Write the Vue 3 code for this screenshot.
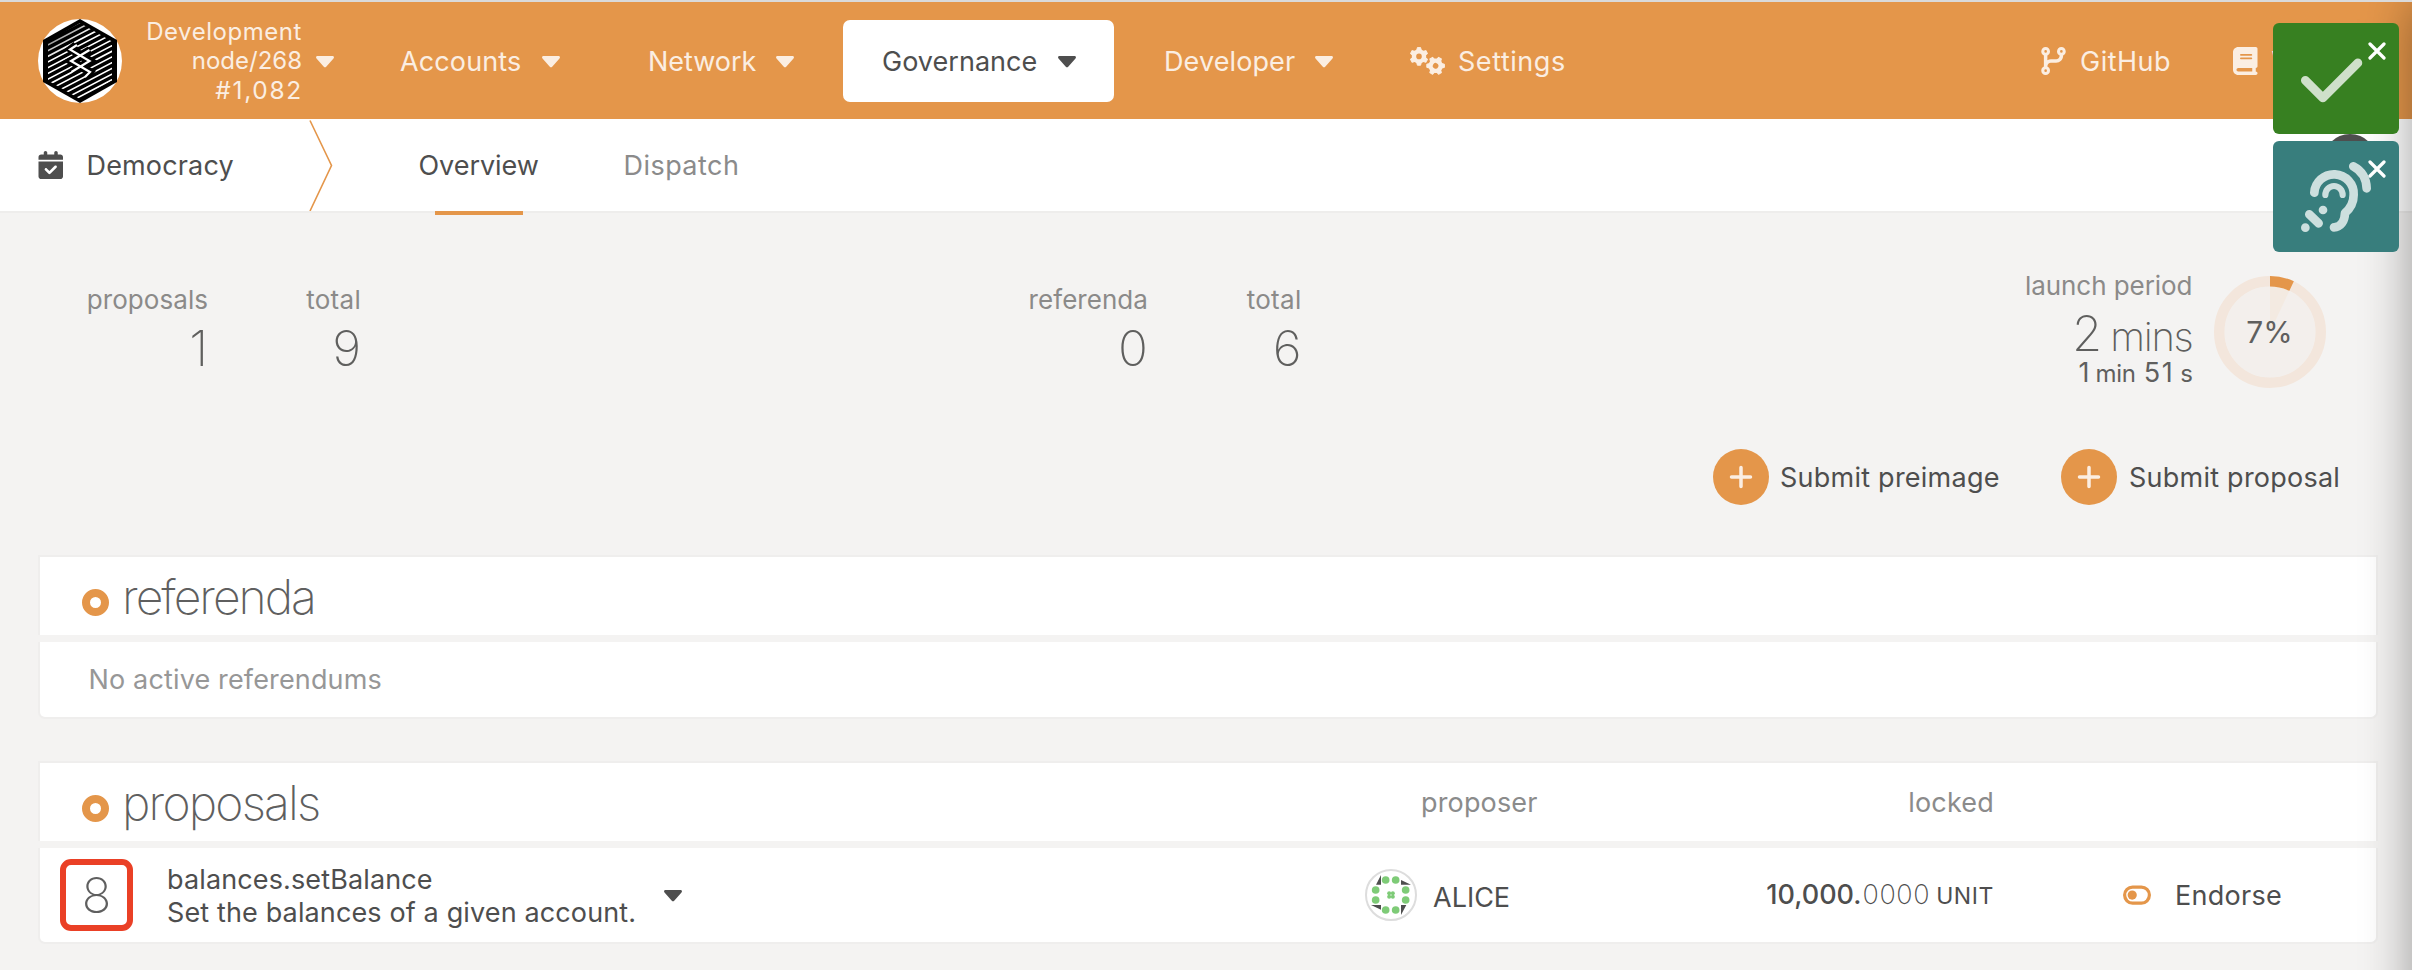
<script setup>
const stripes = Array.from({ length: 24 }, (_, i) => {
  const y = -8 + i * 5.7
  return `M0 ${y + 22}L84 ${y - 22}`
}).join('')

const teeth = [0, 60, 120, 180, 240, 300]
const gears = [
  { x: 9, y: 9.4, turn: 0 },
  { x: 25.6, y: 18.8, turn: 30 },
]

const menus = [
  { label: 'Accounts', ls: '0.12px' },
  { label: 'Network', ls: '-0.03px' },
  { label: 'Governance', ls: '0.03px', active: true },
  { label: 'Developer', ls: '0.11px' },
]

const stats = [
  { label: 'proposals', value: '1', ls: '0.05px' },
  { label: 'total', value: '9', ls: '0.3px' },
  { label: 'referenda', value: '0', ls: '0.05px' },
  { label: 'total', value: '6', ls: '0.3px' },
]

const progress = 7
const angle = (progress / 100) * 2 * Math.PI
const px = (r) => 56 + r * Math.sin(angle)
const py = (r) => 56 - r * Math.cos(angle)
const arc = `M56 0A56 56 0 0 1 ${px(56)} ${py(56)}L${px(45.5)} ${py(45.5)}A45.5 45.5 0 0 0 56 10.5Z`
const wedge = `M56 56L56 10.5A45.5 45.5 0 0 1 ${px(45.5)} ${py(45.5)}Z`

const dots = [[62, 33], [92, 33], [32, 63], [32, 93], [122, 63], [122, 93], [62, 123], [92, 123]]
const seeds = [[72.5, 72.5], [83.5, 72.5], [72.5, 83.5], [83.5, 83.5]]
</script>

<template>
  <div class="page">
    <header class="topbar">
      <svg class="logo" viewBox="0 0 84 84">
        <defs>
          <clipPath id="hex"><path d="M42 4L74 22.5V61.5L42 80L10 61.5V22.5Z" /></clipPath>
          <linearGradient id="fade" gradientUnits="userSpaceOnUse" x1="10" y1="5" x2="50" y2="60">
            <stop offset="0.1" stop-color="#555" />
            <stop offset="0.45" stop-color="#fff" />
          </linearGradient>
        </defs>
        <circle cx="42" cy="42" r="42" fill="#fff" />
        <path d="M42 0L79 21V63L42 84L5 63V21Z" fill="#000" />
        <g clip-path="url(#hex)">
          <path :d="stripes" stroke="url(#fade)" stroke-width="1.6" fill="none" />
        </g>
        <path d="M38 26l-5 4 19 12-18 11M52 31L33 42l19 11-4 5" stroke="#000" stroke-width="8" fill="none" />
        <path d="M39 26l-7 4.500 19.500 11.500-18 11M51.500 31L33 42l19 11-5 5" stroke="#fff" stroke-width="2.200" fill="none" />
      </svg>
      <div class="chain">
        <span class="dev">Development</span>
        <span>node/268</span>
        <span class="block">#1,082</span>
      </div>
      <svg class="caret" viewBox="0 0 18 12"><path d="M1.500 0h15c1.300 0 2 1.400 1 2.400l-7.300 8.300c-.7.700-1.700.7-2.400 0L.5 2.400C-.5 1.400.2 0 1.500 0z" /></svg>
      <nav class="menu">
        <a v-for="m in menus" :key="m.label" class="item" :class="{ active: m.active }">
          <span :style="{ letterSpacing: m.ls }">{{ m.label }}</span>
          <svg class="caret" viewBox="0 0 18 12"><path d="M1.500 0h15c1.300 0 2 1.400 1 2.400l-7.300 8.300c-.7.700-1.700.7-2.400 0L.5 2.400C-.5 1.400.2 0 1.500 0z" /></svg>
        </a>
      </nav>
      <a class="settings">
        <svg class="gears" viewBox="0 0 35 28">
          <g v-for="(g, i) in gears" :key="i" :transform="`translate(${g.x} ${g.y}) rotate(${g.turn})`">
            <circle r="5" fill="none" stroke="currentColor" stroke-width="4.400" />
            <path v-for="t in teeth" :key="t" d="M-2.400-5.500L-1.600-8.800h3.200L2.400-5.500z" :transform="`rotate(${t})`" fill="currentColor" stroke="currentColor" stroke-width="1" stroke-linejoin="round" />
          </g>
        </svg>
        <span>Settings</span>
      </a>
      <a class="link github">
        <svg width="25" height="28" viewBox="0 0 448 512"><path fill="currentColor" d="M80 104a24 24 0 1 0 0-48 24 24 0 1 0 0 48zm80-24c0 32.800-19.700 61-48 73.300v87.800c18.800-10.900 40.700-17.100 64-17.100h96c35.300 0 64-28.700 64-64v-6.700C307.700 141 288 112.800 288 80c0-44.200 35.800-80 80-80s80 35.800 80 80c0 32.800-19.700 61-48 73.300V160c0 70.700-57.300 128-128 128H176c-35.300 0-64 28.700-64 64v6.700c28.300 12.300 48 40.500 48 73.300c0 44.200-35.800 80-80 80s-80-35.800-80-80c0-32.800 19.700-61 48-73.300V352 153.300C19.700 141 0 112.800 0 80C0 35.800 35.800 0 80 0s80 35.800 80 80zm232 0a24 24 0 1 0-48 0 24 24 0 1 0 48 0zM80 456a24 24 0 1 0 0-48 24 24 0 1 0 0 48z" /></svg>
        <span>GitHub</span>
      </a>
      <a class="link wiki">
        <svg width="24.500" height="28" viewBox="0 0 448 512"><path fill="currentColor" d="M96 0C43 0 0 43 0 96V416c0 53 43 96 96 96H384h32c17.700 0 32-14.300 32-32s-14.300-32-32-32V384c17.700 0 32-14.300 32-32V32c0-17.700-14.300-32-32-32H384 96zm0 384H352v64H96c-17.700 0-32-14.300-32-32s14.300-32 32-32zm32-240c0-8.800 7.200-16 16-16H336c8.800 0 16 7.200 16 16s-7.200 16-16 16H144c-8.800 0-16-7.200-16-16zm16 48H336c8.800 0 16 7.200 16 16s-7.200 16-16 16H144c-8.800 0-16-7.200-16-16s7.200-16 16-16z" /></svg>
        <span>Wiki</span>
      </a>
    </header>

    <div class="tabs">
      <svg class="cal" viewBox="0 0 448 512"><path fill="currentColor" d="M128 0c17.700 0 32 14.300 32 32V64H288V32c0-17.700 14.300-32 32-32s32 14.300 32 32V64h48c26.500 0 48 21.500 48 48v48H0V112C0 85.500 21.500 64 48 64H96V32c0-17.700 14.300-32 32-32zM0 192H448V464c0 26.500-21.500 48-48 48H48c-26.500 0-48-21.500-48-48V192zM329 305c9.400-9.400 9.400-24.600 0-33.900s-24.600-9.400-33.900 0l-95 95-47-47c-9.400-9.400-24.600-9.400-33.900 0s-9.400 24.600 0 33.900l64 64c9.400 9.400 24.600 9.400 33.900 0L329 305z" /></svg>
      <span class="section">Democracy</span>
      <svg class="chevron" viewBox="0 0 24 92"><path d="M1 1.500L22.500 46.500L1 92" fill="none" stroke="#e4964a" stroke-width="1.600" /></svg>
      <a class="tab current">Overview</a>
      <a class="tab dispatch">Dispatch</a>
      <span class="avatar"></span>
    </div>

    <main>
      <section class="stats">
        <div v-for="(s, i) in stats" :key="i" class="stat">
          <div class="label" :style="{ letterSpacing: s.ls }">{{ s.label }}</div>
          <div class="value">{{ s.value }}</div>
        </div>
        <div class="launch">
          <div class="label">launch period</div>
          <div class="big">2<span>mins</span></div>
          <div class="small">1<i>min</i><b>51</b><i>s</i></div>
        </div>
        <div class="ring">
          <svg viewBox="0 0 112 112">
            <circle cx="56" cy="56" r="45.500" fill="#f3efec" />
            <path :d="wedge" fill="#f3eae1" />
            <circle cx="56" cy="56" r="50.750" fill="none" stroke="#f3e6dc" stroke-width="10.500" />
            <path :d="arc" fill="#e4964a" />
          </svg>
          <span>{{ progress }}%</span>
        </div>
      </section>

      <section class="actions">
        <a class="action first">
          <svg viewBox="0 0 56 56"><circle cx="28" cy="28" r="28" fill="#e4964a" /><path d="M28 18.500v19M18.500 28h19" stroke="#fbeee2" stroke-width="3.500" stroke-linecap="round" /></svg>
          <span>Submit preimage</span>
        </a>
        <a class="action">
          <svg viewBox="0 0 56 56"><circle cx="28" cy="28" r="28" fill="#e4964a" /><path d="M28 18.500v19M18.500 28h19" stroke="#fbeee2" stroke-width="3.500" stroke-linecap="round" /></svg>
          <span>Submit proposal</span>
        </a>
      </section>

      <section class="table">
        <div class="head">
          <div class="title"><i class="dot"></i><h1>referenda</h1></div>
        </div>
        <div class="body empty">No active referendums</div>
      </section>

      <section class="table">
        <div class="head">
          <div class="title"><i class="dot"></i><h1 class="props">proposals</h1></div>
          <div class="col-proposer">proposer</div>
          <div class="col-locked">locked</div>
        </div>
        <div class="body row">
          <div class="num">8<span class="mark"></span></div>
          <div class="call">balances.setBalance<br />Set the balances of a given account.</div>
          <div class="expand">
            <svg class="caret" viewBox="0 0 18 12"><path d="M1.500 0h15c1.300 0 2 1.400 1 2.400l-7.300 8.300c-.7.700-1.700.7-2.400 0L.5 2.400C-.5 1.400.2 0 1.500 0z" /></svg>
          </div>
          <div class="who">
            <svg viewBox="0 0 156 156">
              <circle cx="78" cy="78" r="75" fill="#fff" stroke="#ddd" stroke-width="6" />
              <path d="M33 47H48V18ZM108 33V47H138ZM18 108H48V122ZM108 108H124L108 138Z" fill="#4e4e4e" />
              <circle v-for="(d, i) in dots" :key="i" :cx="d[0]" :cy="d[1]" r="11.500" fill="#7ecb77" />
              <circle v-for="(d, i) in seeds" :key="'s' + i" :cx="d[0]" :cy="d[1]" r="6" fill="#7ecb77" />
            </svg>
            <span>ALICE</span>
          </div>
          <div class="amount"><span class="whole">10,000.</span><span class="frac">0000</span><span class="unit">UNIT</span></div>
          <div class="endorse">
            <svg viewBox="0 0 28 20"><rect x="1.600" y="2.100" width="24.800" height="16" rx="8" fill="none" stroke="#e4964a" stroke-width="3.200" /><circle cx="9.200" cy="10.100" r="4.600" fill="#e4964a" /></svg>
            <span>Endorse</span>
          </div>
        </div>
      </section>
    </main>

    <div class="edge"></div>

    <aside class="toasts">
      <div class="toast ok">
        <svg class="glyph" viewBox="0 0 512 512"><path transform="translate(0 32)" d="M438.600 105.400c12.500 12.500 12.500 32.800 0 45.300l-256 256c-12.500 12.500-32.800 12.500-45.300 0l-128-128c-12.500-12.500-12.500-32.800 0-45.300s32.800-12.500 45.300 0L160 338.700 393.400 105.400c12.500-12.500 32.800-12.500 45.300 0z" fill="#cfe0ca" /></svg>
        <svg class="close" viewBox="0 0 18 18"><path d="M2 2L16 16M16 2L2 16" /></svg>
      </div>
      <div class="toast listen">
        <svg class="glyph" viewBox="0 0 210 210" fill="none" stroke="#cddfde" stroke-linecap="round" stroke-linejoin="round">
          <path d="M40 92A59 58 0 0 1 158 98C158 124 148 139 132 153C131 178 119 196 99 196" stroke-width="26" />
          <path d="M73 99A26 27 0 0 1 125 99" stroke-width="18.500" />
          <path d="M157 13C182 26 196 50 197 79M25 157L53 184" stroke-width="26" />
          <path d="M66 144h.1M13 197h.1" stroke-width="26" />
        </svg>
        <svg class="close" viewBox="0 0 18 18"><path d="M2 2L16 16M16 2L2 16" /></svg>
      </div>
    </aside>
  </div>
</template>

<style>
body {
  background: #f4f3f2;
}
</style>

<style scoped>
.page {
  position: relative;
  width: 2412px;
  height: 970px;
  overflow: hidden;
  box-sizing: border-box;
  border-top: 2px solid #dadada;
  background: #f4f3f2;
  color: #4e4e4e;
  font: 400 27px/33px Inter, 'Liberation Sans', sans-serif;
  white-space: nowrap;
}
svg {
  display: block;
  flex: none;
}
.caret {
  width: 18px;
  height: 12px;
  fill: currentColor;
}
.topbar {
  display: flex;
  align-items: center;
  height: 117px;
  background: #e4964a;
  color: #fbeee2;
}
.logo {
  width: 84px;
  height: 84px;
  margin-left: 38px;
}
.chain {
  display: flex;
  flex-direction: column;
  align-items: flex-end;
  width: 180px;
  padding-top: 1px;
  font-size: 24px;
  line-height: 29.5px;
}
.dev {
  letter-spacing: 0.55px;
}
.block {
  font-size: 24.500px;
  letter-spacing: 1.700px;
  margin-right: -1px;
}
.chain + .caret {
  margin: 2px 0 0 14px;
}
.menu {
  display: grid;
  grid-template-columns: 237px 223px 271px 246px;
  gap: 11px;
  margin-left: 27px;
}
.item {
  display: flex;
  align-items: center;
  justify-content: space-between;
  box-sizing: border-box;
  height: 82px;
  padding: 0 38px 0 39px;
  border-radius: 7px;
}
.item .caret {
  margin-top: 2px;
}
.item span,
.settings span,
.link span,
.section {
  padding-top: 1px;
}
.item.active {
  background: #fff;
  color: #4e4e4e;
}
.settings {
  display: flex;
  align-items: center;
  width: 631px;
  margin-left: 39px;
  letter-spacing: 0.55px;
}
.gears {
  width: 35px;
  height: 28px;
  margin-right: 13px;
}
.link {
  display: flex;
  align-items: center;
}
.github {
  width: 192px;
  gap: 14px;
  letter-spacing: 0.49px;
}
.wiki {
  gap: 14px;
}
.tabs {
  position: relative;
  display: flex;
  align-items: center;
  height: 92px;
  background: #fff;
  border-bottom: 2px solid #eeedec;
}
.cal {
  width: 25.500px;
  height: 28px;
  margin-left: 38px;
}
.section {
  width: 222px;
  margin-left: 23px;
  letter-spacing: 0.16px;
}
.chevron {
  width: 24px;
  height: 92px;
}
.tab {
  margin-left: 86px;
  padding-top: 1px;
  letter-spacing: -0.04px;
}
.current {
  position: relative;
  width: 120px;
}
.current::after {
  content: '';
  position: absolute;
  left: 16px;
  top: 63px;
  width: 88px;
  height: 4px;
  background: #e4964a;
}
.dispatch {
  margin-left: 85px;
  letter-spacing: 0.45px;
  color: #8b8b8b;
}
.avatar {
  position: absolute;
  left: 2323px;
  top: 15px;
  width: 54px;
  height: 54px;
  border-radius: 50%;
  background: #4e4e4e;
}
.stats {
  display: grid;
  grid-template-columns: 208px 153px 787px 153.5px 891px 21px 112px;
  height: 236px;
  text-align: right;
}
.stat {
  padding-top: 70.5px;
}
.label {
  font-size: 26px;
  line-height: 32px;
  color: #8b8a89;
}
.value {
  font-size: 49.5px;
  font-weight: 250;
  line-height: 64px;
  color: #5f5f5e;
}
.launch {
  padding-top: 56.5px;
  color: #5f5f5e;
}
.launch .label {
  letter-spacing: -0.05px;
}
.big {
  margin-top: 7px;
  font-size: 49px;
  font-weight: 200;
  line-height: 50px;
}
.big span {
  margin-left: 8px;
  font-size: 40px;
  letter-spacing: -1.3px;
}
.small {
  display: flex;
  justify-content: flex-end;
  align-items: baseline;
  margin-top: -2px;
  line-height: 25.5px;
}
.small i {
  margin: 0 0 0 6px;
  font-style: normal;
  font-size: 24px;
  letter-spacing: -0.3px;
}
.small b {
  margin-left: 8px;
  font-weight: 400;
  letter-spacing: 1.5px;
}
.ring {
  display: grid;
  grid-column: 7;
  align-self: start;
  margin-top: 63px;
  place-items: center;
}
.ring > * {
  grid-area: 1 / 1;
}
.ring svg {
  width: 112px;
  height: 112px;
}
.ring span {
  padding-top: 1px;
  font-size: 30px;
  color: #5f5f5e;
}
.actions {
  display: flex;
  justify-content: flex-end;
  gap: 60px;
  margin-bottom: 50px;
  padding-right: 71px;
}
.action {
  display: flex;
  align-items: center;
  gap: 12px;
  width: 280px;
  letter-spacing: 0.24px;
}
.action.first {
  gap: 11px;
  width: 288px;
}
.action svg {
  width: 56px;
  height: 56px;
}
.table {
  width: 2340px;
  box-sizing: border-box;
  margin: 0 0 42px 38px;
}
.head {
  display: flex;
  align-items: center;
  height: 78px;
  border: 2px solid #efeeed;
  border-bottom: 0;
  background: #fff;
  color: #8b8b8b;
}
.body {
  height: 75px;
  margin-top: 7px;
  border: 2px solid #efeeed;
  border-top: 0;
  border-radius: 0 0 7px 7px;
  background: #fff;
}
.title {
  display: flex;
  align-items: center;
  width: 1325px;
}
.dot {
  width: 11px;
  height: 11px;
  margin: 12px 13px 0 42px;
  border: 8.5px solid #e4964a;
  border-radius: 50%;
}
h1 {
  margin: 0;
  padding-top: 1px;
  font-size: 48px;
  font-weight: 200;
  line-height: 60px;
  letter-spacing: -2px;
  color: #5f5f5f;
}
.props {
  letter-spacing: -1.8px;
}
.empty {
  padding-left: 48.5px;
  line-height: 76px;
  letter-spacing: 0.15px;
  color: #979797;
}
.col-proposer {
  width: 287px;
  padding-left: 56px;
  letter-spacing: 0.15px;
}
.col-locked {
  width: 286px;
  text-align: right;
  letter-spacing: 0.2px;
}
.row {
  display: flex;
  align-items: center;
  height: 94px;
}
.num {
  position: relative;
  width: 113px;
  padding-top: 1px;
  text-align: center;
  font-size: 49px;
  font-weight: 200;
  line-height: 60px;
  color: #5f5f5f;
}
.mark {
  position: absolute;
  left: 20px;
  top: -6px;
  box-sizing: border-box;
  width: 73px;
  height: 72px;
  border: 6px solid #ea4026;
  border-radius: 11px;
}
.call {
  width: 497px;
  padding: 2px 0 0 14px;
  letter-spacing: 0.13px;
}
.expand {
  width: 701px;
  padding-top: 2px;
}
.who {
  display: flex;
  align-items: center;
  width: 343px;
}
.who svg {
  width: 52px;
  height: 52px;
}
.who span {
  margin: 4px 0 0 16px;
}
.amount {
  display: flex;
  align-items: baseline;
  justify-content: flex-end;
  width: 286px;
}
.whole {
  font-weight: 450;
}
.frac {
  margin-left: 1px;
  font-weight: 200;
  letter-spacing: 0.6px;
}
.unit {
  margin-left: 6px;
  font-size: 23px;
  letter-spacing: 0.6px;
}
.endorse {
  display: flex;
  align-items: center;
  gap: 24px;
  padding-left: 129px;
  letter-spacing: 0.28px;
}
.endorse svg {
  width: 28px;
  height: 20px;
}
.edge {
  position: absolute;
  left: 2412px;
  top: 0;
  width: 60px;
  height: 1100px;
  box-shadow: 0 0 50px rgba(0, 0, 0, 0.38);
}
.toasts {
  position: absolute;
  left: 2273px;
  top: 21px;
  display: grid;
  gap: 7px;
}
.toast {
  position: relative;
  width: 126px;
  height: 111px;
  border-radius: 6px;
}
.ok {
  background: #378021;
}
.listen {
  background: #387e7d;
}
.glyph {
  position: absolute;
  left: 28px;
  top: 21px;
  width: 70px;
  height: 70px;
}
.ok .glyph {
  top: 18px;
}
.close {
  position: absolute;
  left: 95px;
  top: 19px;
  width: 18px;
  height: 18px;
  fill: none;
  stroke: #fff;
  stroke-width: 3.2;
  stroke-linecap: round;
}
</style>
